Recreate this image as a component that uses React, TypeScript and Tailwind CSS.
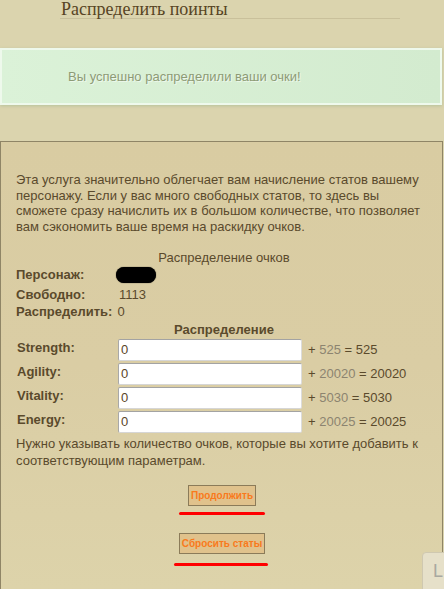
import React from "react";

const font = { fontFamily: '"Liberation Sans", Arial, sans-serif' };

function StatRow({ label, value, labelClass = "" }: { label: string; value: string; labelClass?: string }) {
  return (
    <div className="grid h-[24px] grid-cols-[102px_1fr] items-start">
      <div className={`pl-px text-[13px] font-bold leading-[18px] text-[#5a4a2c] ${labelClass}`}>{label}</div>
      <div className="flex items-center">
        <div className="flex h-[22px] w-[184px] items-center rounded-[2px] border border-t-[#a3a3a3] border-l-[#a8a8a8] border-r-[#dcdcdc] border-b-[#d6d6d6] bg-white pl-[2px] text-[13px] text-[#5a4528]">
          0
        </div>
        <div className="ml-[6px] text-[13px] text-[#5a4a2c]">
          + <span className="text-[#8c8470]">{value}</span> = {value}
        </div>
      </div>
    </div>
  );
}

export default function App() {
  return (
    <div
      className="relative h-[589px] w-[444px] overflow-hidden bg-[#dbd4ae]"
      style={font}
    >
      {/* Header */}
      <div className="ml-[60px] w-[340px] border-b border-[#c9c09b]">
        <div
          className="h-[18px] pl-px text-[18px] leading-[18px] text-[#574424]"
          style={{ fontFamily: '"Liberation Serif", "Times New Roman", serif' }}
        >
          Распределить поинты
        </div>
      </div>

      {/* Success box */}
      <div className="mt-[29px] flex h-[57px] w-[442px] items-center border-2 border-[#eef9ec] bg-gradient-to-r from-[#dbf2d8] to-[#d3ebcf] pl-[66px] shadow-[0_1px_3px_rgba(150,180,140,0.5)]">
        <span className="text-[13px] text-[#8d9b76] [text-shadow:1px_1px_0_rgba(255,255,255,0.55)]">
          Вы успешно распределили ваши очки!
        </span>
      </div>

      {/* Main panel */}
      <div className="mt-[36px] h-[449px] w-[443px] border border-[#8f8566] bg-gradient-to-b from-[#d9cca2] via-[#dacda4] to-[#ddd3aa] pl-[15px] pr-[10px] pt-[30px] text-[#5a4a2c]">
        <p className="text-[13px] leading-[15.5px]">
          Эта услуга значительно облегчает вам начисление статов вашему персонажу. Если у вас много свободных статов, то здесь вы сможете сразу начислить их в большом количестве, что позволяет вам сэкономить ваше время на раскидку очков.
        </p>

        <div className="mt-[16px] h-[15px] text-center text-[13px] leading-[15px]">Распределение очков</div>

        <div className="grid h-[20px] grid-cols-[100px_1fr] items-center text-[13px]">
          <div className="font-bold">Персонаж:</div>
          <div className="flex">
            <div className="h-[16px] w-[40px] rounded-full bg-black [box-shadow:0_0_1px_#000]" />
          </div>
        </div>
        <div className="grid h-[18px] grid-cols-[102px_1fr] items-center text-[13px]">
          <div className="font-bold">Свободно:</div>
          <div className="pl-[1px]">1113</div>
        </div>
        <div className="flex h-[18px] items-center text-[13px]">
          <span className="font-bold">Распределить:</span>
          <span className="ml-[5px]">0</span>
        </div>
        <div className="h-[17px] text-center text-[13px] font-bold leading-[17px]">Распределение</div>
        <div className="mt-px">
          <StatRow label="Strength:" value="525" labelClass="pl-[2px]" />
          <StatRow label="Agility:" value="20020" />
          <StatRow label="Vitality:" value="5030" />
          <StatRow label="Energy:" value="20025" />
        </div>

        <p className="text-[13px] leading-[17px]">
          Нужно указывать количество очков, которые вы хотите добавить к соответствующим параметрам.
        </p>

        <div className="mt-[16px] flex flex-col items-center pr-[5px]">
          <div className="ml-[1px] flex h-[21px] items-center border border-[#8b7b59] bg-[#e0c28c] px-[2px] text-[10px] font-bold text-[#f97a1c]">
            Продолжить
          </div>
          <div className="mt-[6px] h-[3px] w-[86px] rounded-full bg-[#ff0000]" />
          <div className="mt-[18px] ml-[1px] flex h-[21px] items-center border border-[#8b7b59] bg-[#e0c28c] px-[2px] text-[10px] font-bold text-[#f97a1c]">
            Сбросить статы
          </div>
          <div className="mt-[9px] ml-[-1px] h-[3px] w-[94px] rounded-full bg-[#ff0000]" />
        </div>
      </div>

      {/* corner widget */}
      <div className="absolute left-[422px] top-[552px] h-[40px] w-[30px] rounded-tl-[4px] border border-[#cfc8b0] bg-[#e6e0c9] pl-[10px] pt-[5px] text-[18px] text-[#a8a8a0]">
        L
      </div>
    </div>
  );
}
